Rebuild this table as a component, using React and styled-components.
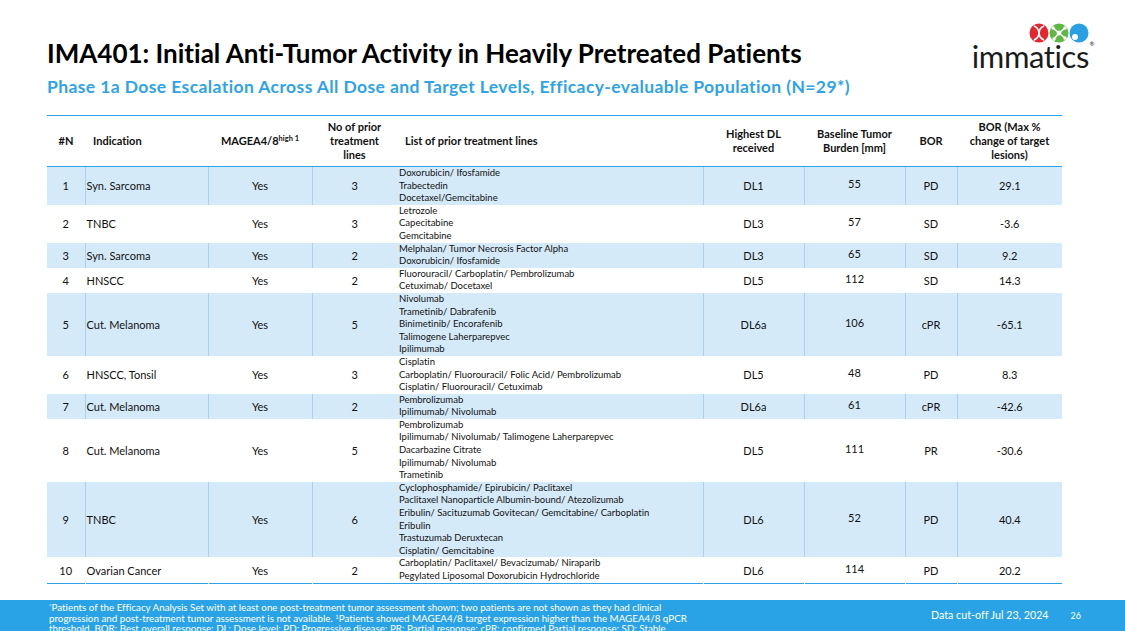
import React from 'react'
import styled, { createGlobalStyle } from 'styled-components'

const rows = [
    { n: 1, ind: 'Syn. Sarcoma', no: 3, list: ['Doxorubicin/ Ifosfamide', 'Trabectedin', 'Docetaxel/Gemcitabine'], dl: 'DL1', base: 55, bor: 'PD', pct: '29.1' },
    { n: 2, ind: 'TNBC', no: 3, list: ['Letrozole', 'Capecitabine', 'Gemcitabine'], dl: 'DL3', base: 57, bor: 'SD', pct: '-3.6' },
    { n: 3, ind: 'Syn. Sarcoma', no: 2, list: ['Melphalan/ Tumor Necrosis Factor Alpha', 'Doxorubicin/ Ifosfamide'], dl: 'DL3', base: 65, bor: 'SD', pct: '9.2' },
    { n: 4, ind: 'HNSCC', no: 2, list: ['Fluorouracil/ Carboplatin/ Pembrolizumab', 'Cetuximab/ Docetaxel'], dl: 'DL5', base: 112, bor: 'SD', pct: '14.3' },
    { n: 5, ind: 'Cut. Melanoma', no: 5, list: ['Nivolumab', 'Trametinib/ Dabrafenib', 'Binimetinib/ Encorafenib', 'Talimogene Laherparepvec', 'Ipilimumab'], dl: 'DL6a', base: 106, bor: 'cPR', pct: '-65.1' },
    { n: 6, ind: 'HNSCC, Tonsil', no: 3, list: ['Cisplatin', 'Carboplatin/ Fluorouracil/ Folic Acid/ Pembrolizumab', 'Cisplatin/ Fluorouracil/ Cetuximab'], dl: 'DL5', base: 48, bor: 'PD', pct: '8.3' },
    { n: 7, ind: 'Cut. Melanoma', no: 2, list: ['Pembrolizumab', 'Ipilimumab/ Nivolumab'], dl: 'DL6a', base: 61, bor: 'cPR', pct: '-42.6' },
    { n: 8, ind: 'Cut. Melanoma', no: 5, list: ['Pembrolizumab', 'Ipilimumab/ Nivolumab/ Talimogene Laherparepvec', 'Dacarbazine Citrate', 'Ipilimumab/ Nivolumab', 'Trametinib'], dl: 'DL5', base: 111, bor: 'PR', pct: '-30.6' },
    { n: 9, ind: 'TNBC', no: 6, list: ['Cyclophosphamide/ Epirubicin/ Paclitaxel', 'Paclitaxel Nanoparticle Albumin-bound/ Atezolizumab', 'Eribulin/ Sacituzumab Govitecan/ Gemcitabine/ Carboplatin', 'Eribulin', 'Trastuzumab Deruxtecan', 'Cisplatin/ Gemcitabine'], dl: 'DL6', base: 52, bor: 'PD', pct: '40.4' },
    { n: 10, ind: 'Ovarian Cancer', no: 2, list: ['Carboplatin/ Paclitaxel/ Bevacizumab/ Niraparib', 'Pegylated Liposomal Doxorubicin Hydrochloride'], dl: 'DL6', base: 114, bor: 'PD', pct: '20.2' },
]

const widths = [38, 123, 104, 85, 306, 101, 101, 52, 105]

export default function App() {
    return (
        <>
            <GlobalStyle />
            <Page>
                <Top>
                    <Titles>
                        <Title>IMA401: Initial Anti-Tumor Activity in Heavily Pretreated Patients</Title>
                        <Subtitle>
                            Phase 1a Dose Escalation Across All Dose and Target Levels, Efficacy-evaluable Population (N=29*)
                        </Subtitle>
                    </Titles>
                    <Logo>
                        <LogoMarks />
                        <Wordmark>
                            immatics<Reg>®</Reg>
                        </Wordmark>
                    </Logo>
                </Top>

                <Table>
                    <colgroup>
                        {widths.map((w, i) => (
                            <col key={i} style={{ width: w }} />
                        ))}
                    </colgroup>
                    <thead>
                        <tr>
                            <Th>#N</Th>
                            <Th align="left">Indication</Th>
                            <Th>
                                MAGEA4/8<sup>high 1</sup>
                            </Th>
                            <Th>
                                No of prior
                                <br />
                                treatment
                                <br />
                                lines
                            </Th>
                            <Th align="left">List of prior treatment lines</Th>
                            <Th>
                                Highest DL
                                <br />
                                received
                            </Th>
                            <Th>
                                Baseline Tumor
                                <br />
                                Burden [mm]
                            </Th>
                            <Th>BOR</Th>
                            <Th>
                                BOR (Max %
                                <br />
                                change of target
                                <br />
                                lesions)
                            </Th>
                        </tr>
                    </thead>
                    <tbody>
                        {rows.map((r) => (
                            <Row key={r.n} shaded={r.n % 2 === 1}>
                                <Td>{r.n}</Td>
                                <Td align="left" divider>
                                    {r.ind}
                                </Td>
                                <Td divider>Yes</Td>
                                <Td divider>{r.no}</Td>
                                <ListCell>
                                    {r.list.map((item) => (
                                        <div key={item}>{item}</div>
                                    ))}
                                </ListCell>
                                <Td divider>{r.dl}</Td>
                                <Td divider raised>
                                    {r.base}
                                </Td>
                                <Td divider>{r.bor}</Td>
                                <Td divider>{r.pct}</Td>
                            </Row>
                        ))}
                    </tbody>
                </Table>

                <Footer>
                    <Note>
                        <sup>*</sup>Patients of the Efficacy Analysis Set with at least one post-treatment tumor assessment shown; two
                        patients are not shown as they had clinical progression and post-treatment tumor assessment is not available.{' '}
                        <sup>1</sup>Patients showed MAGEA4/8 target expression higher than the MAGEA4/8 qPCR threshold. BOR: Best overall
                        response; DL: Dose level; PD: Progressive disease; PR: Partial response; cPR: confirmed Partial response; SD:
                        Stable disease.
                    </Note>
                    <Meta>
                        <span>Data cut-off Jul 23, 2024</span>
                        <PageNum>26</PageNum>
                    </Meta>
                </Footer>
            </Page>
        </>
    )
}

const LogoMarks = () => (
    <svg width="60" height="22" viewBox="0 0 60 22">
        <circle cx="10" cy="11" r="9.5" fill="#e3262f" />
        <path d="M5 4 C 14 8, 6 14, 15 18" stroke="#fff" strokeWidth="1.8" fill="none" />
        <path d="M15 4 C 6 8, 14 14, 5 18" stroke="#fff" strokeWidth="1.8" fill="none" />
        <circle cx="30" cy="11" r="9.5" fill="#5fb846" />
        <path d="M30 11 L24 6 M30 11 L36 6 M30 11 L25 17 M30 11 L36 16" stroke="#fff" strokeWidth="1.6" />
        <circle cx="30" cy="11" r="2.4" fill="#fff" />
        <circle cx="24" cy="6" r="1.7" fill="#fff" />
        <circle cx="36" cy="6" r="1.7" fill="#fff" />
        <circle cx="25" cy="17" r="1.7" fill="#fff" />
        <circle cx="36" cy="16" r="1.7" fill="#fff" />
        <circle cx="50" cy="11" r="9.5" fill="#2aa0e4" />
        <circle cx="46" cy="15" r="3" fill="#fff" />
    </svg>
)

const GlobalStyle = createGlobalStyle`
    html, body {
        margin: 0;
        padding: 0;
        background: #fff;
    }
    body {
        font-family: Lato, "Open Sans", sans-serif;
        font-variant-ligatures: none;
        color: #111;
    }
`

const Page = styled.div`
    width: 1125px;
    height: 631px;
    display: flex;
    flex-direction: column;
    overflow: hidden;
    background: #fff;
`

const Top = styled.div`
    display: flex;
    justify-content: space-between;
    align-items: flex-start;
    padding: 22px 36px 0 47px;
    height: 115px;
    box-sizing: border-box;
`

const Titles = styled.div`
    padding-top: 16px;
`

const Title = styled.div`
    font-size: 26px;
    font-weight: 700;
    line-height: 30px;
    color: #000;
    white-space: nowrap;
`

const Subtitle = styled.div`
    margin-top: 9px;
    font-size: 17.5px;
    font-weight: 700;
    letter-spacing: 0.4px;
    line-height: 20px;
    color: #2ea3e8;
    white-space: nowrap;
`

const Logo = styled.div`
    display: flex;
    flex-direction: column;
    align-items: flex-end;
    width: 122px;
`

const Wordmark = styled.div`
    position: relative;
    margin-top: -2px;
    font-size: 31px;
    font-weight: 400;
    letter-spacing: -0.4px;
    line-height: 28px;
    color: #1c1c1c;
`

const Reg = styled.span`
    position: absolute;
    top: -1px;
    right: -5px;
    font-size: 6px;
    line-height: 6px;
`

const Table = styled.table`
    margin-left: 47px;
    width: 1015px;
    border-collapse: collapse;
    table-layout: fixed;
    border-top: 1.5px solid #2ea3e8;
    border-bottom: 1.5px solid #2ea3e8;
`

const Th = styled.th`
    height: 50px;
    padding: 0 0 0 ${({ align }) => (align === 'left' ? '8px' : '0')};
    font-size: 11px;
    font-weight: 700;
    line-height: 14px;
    text-align: ${({ align }) => align || 'center'};
    vertical-align: middle;
    border-bottom: 1.5px solid #2ea3e8;
    color: #111;

    sup {
        font-size: 7.5px;
        vertical-align: 4px;
        line-height: 0;
    }
`

const Row = styled.tr`
    background: ${({ shaded }) => (shaded ? '#d5eaf9' : '#fff')};

    td {
        border-left-color: ${({ shaded }) => (shaded ? '#a7d2f2' : 'transparent')};
    }
`

const Td = styled.td`
    padding: 0 0 ${({ raised }) => (raised ? '4px' : '0')} ${({ align }) => (align === 'left' ? '1px' : '0')};
    font-size: 11px;
    line-height: 13px;
    text-align: ${({ align }) => align || 'center'};
    vertical-align: middle;
    border-left: ${({ divider }) => (divider ? '1px solid' : '0')};
`

const ListCell = styled.td`
    padding: 0 0 0 2px;
    font-size: 9.5px;
    line-height: 12.6px;
    vertical-align: middle;
    white-space: nowrap;
`

const Footer = styled.div`
    margin-top: auto;
    height: 31px;
    background: #2aa3e6;
    color: #fff;
    display: flex;
    justify-content: space-between;
    align-items: flex-start;
    padding: 2px 44px 0 49px;
    box-sizing: border-box;
    overflow: hidden;
`

const Note = styled.div`
    width: 648px;
    font-size: 9.8px;
    line-height: 10.7px;

    sup {
        font-size: 6px;
        vertical-align: 3px;
        line-height: 0;
    }
`

const Meta = styled.div`
    display: flex;
    gap: 22px;
    padding-top: 7px;
    font-size: 10.7px;
    line-height: 12px;
`

const PageNum = styled.span`
    font-size: 9px;
    line-height: 13px;
`
